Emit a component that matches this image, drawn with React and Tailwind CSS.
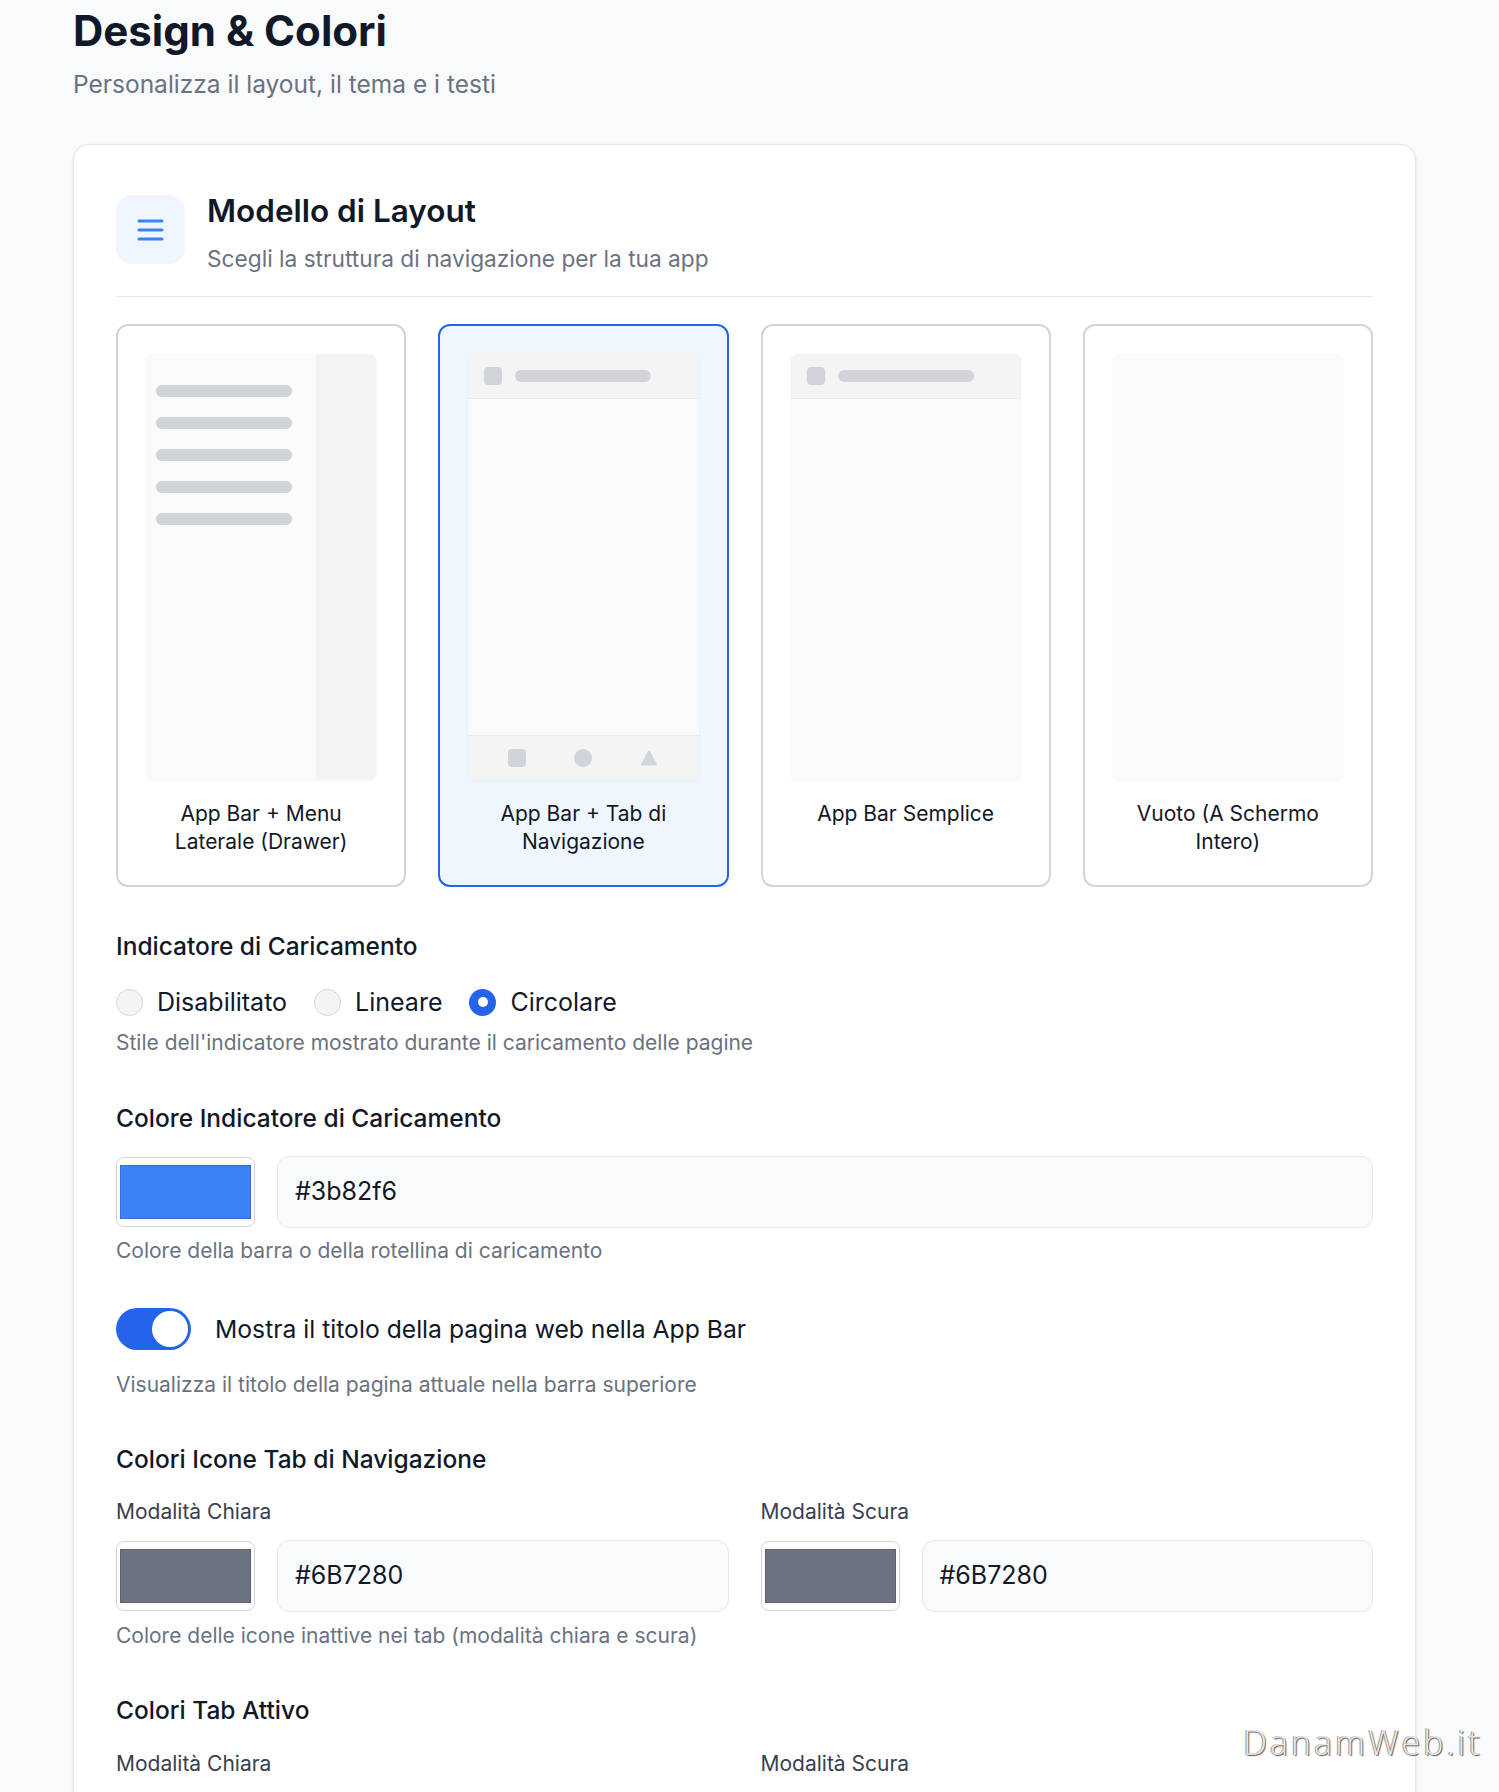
import React from "react";

function MenuGlyph() {
  return (
    <svg width="27" height="22" viewBox="0 0 27 22" fill="none">
      <path
        d="M2 2h23M2 11h23M2 20h23"
        stroke="#3b82f6"
        strokeWidth="3"
        strokeLinecap="round"
      />
    </svg>
  );
}

function AppBar() {
  return (
    <div className="h-[45px] bg-[#f4f4f5] border-b border-[#ebebeb] flex items-center pl-4 gap-[13px]">
      <div className="w-[18px] h-[18px] rounded-[4px] bg-[#d1d5db]"></div>
      <div className="w-[136px] h-3 rounded-full bg-[#d1d5db]"></div>
    </div>
  );
}

function Preview({ type }) {
  if (type === "drawer") {
    return (
      <div className="h-[426px] rounded-md overflow-hidden flex shadow-[0_1px_3px_rgba(0,0,0,0.04)]">
        <div className="w-[170px] bg-[#fafafa] pt-[31px] px-[10px] flex flex-col gap-5">
          <div className="h-3 w-[136px] rounded-full bg-[#d1d5db]"></div>
          <div className="h-3 w-[136px] rounded-full bg-[#d1d5db]"></div>
          <div className="h-3 w-[136px] rounded-full bg-[#d1d5db]"></div>
          <div className="h-3 w-[136px] rounded-full bg-[#d1d5db]"></div>
          <div className="h-3 w-[136px] rounded-full bg-[#d1d5db]"></div>
        </div>
        <div className="flex-1 bg-[#f3f3f4]"></div>
      </div>
    );
  }
  if (type === "tabs") {
    return (
      <div className="h-[426px] rounded-md overflow-hidden flex flex-col bg-[#fafafa] shadow-[0_1px_3px_rgba(0,0,0,0.04)]">
        <AppBar />
        <div className="flex-1"></div>
        <div className="h-[45px] bg-[#f4f4f5] border-t border-[#ebebeb] flex items-center justify-center gap-[48px]">
          <div className="w-[18px] h-[18px] rounded-[4px] bg-[#d1d5db]"></div>
          <div className="w-[18px] h-[18px] rounded-full bg-[#d1d5db]"></div>
          <svg width="18" height="18" viewBox="0 0 18 18">
            <path
              d="M9 2.5 L16 15.5 L2 15.5 Z"
              fill="#d1d5db"
              stroke="#d1d5db"
              strokeWidth="2"
              strokeLinejoin="round"
            />
          </svg>
        </div>
      </div>
    );
  }
  if (type === "simple") {
    return (
      <div className="h-[426px] rounded-md overflow-hidden flex flex-col bg-[#fafafa] shadow-[0_1px_3px_rgba(0,0,0,0.04)]">
        <AppBar />
        <div className="flex-1"></div>
      </div>
    );
  }
  return (
    <div className="h-[426px] rounded-md bg-[#fafafa] shadow-[0_1px_3px_rgba(0,0,0,0.04)]"></div>
  );
}

function LayoutOption({ type, label, selected }) {
  return (
    <div
      className={
        selected
          ? "rounded-xl border-2 border-[#2563eb] bg-[#eff6ff] px-7 pt-7 pb-[29px]"
          : "rounded-xl border-2 border-[#d4d4d8] bg-white px-7 pt-7 pb-[29px]"
      }
    >
      <Preview type={type} />
      <p className="mt-5 h-14 text-[21px] leading-7 text-center text-[#111827]">
        {label}
      </p>
    </div>
  );
}

function Radio({ label, checked }) {
  return (
    <div className="flex items-center gap-[14px]">
      {checked ? (
        <div className="w-[27px] h-[27px] rounded-full bg-[#2563eb] flex items-center justify-center">
          <div className="w-[10px] h-[10px] rounded-full bg-white"></div>
        </div>
      ) : (
        <div className="w-[27px] h-[27px] rounded-full border border-[#d1d5db] bg-[#f3f4f6]"></div>
      )}
      <span className="text-[25px] leading-8 text-[#111827]">{label}</span>
    </div>
  );
}

function Helper({ children, className }) {
  return (
    <p className={"text-[21px] leading-7 text-[#6b7280] " + className}>
      {children}
    </p>
  );
}

function SectionTitle({ children, className }) {
  return (
    <h3
      className={
        "text-[24.5px] leading-8 font-medium text-[#111827] " + className
      }
    >
      {children}
    </h3>
  );
}

function ColorField({ color, value }) {
  return (
    <div className="flex items-center gap-[22px]">
      <div className="w-[139px] h-[70px] shrink-0 rounded-lg border border-[#d1d5db] bg-white px-[3px] flex items-center">
        <div
          className="w-full h-[54px] border border-[#00000022]"
          style={{ backgroundColor: color }}
        ></div>
      </div>
      <div className="flex-1 h-[72px] rounded-xl border border-[#e5e7eb] bg-[#f9fafb] px-[17px] flex items-center text-[25px] text-[#111827]">
        {value}
      </div>
    </div>
  );
}

function ModeLabel({ children }) {
  return <p className="text-[21px] leading-7 text-[#374151]">{children}</p>;
}

export default function App() {
  return (
    <div className="relative min-h-screen bg-[#f8fafc] font-['Inter',sans-serif] overflow-hidden">
      <div className="pl-[73px] pt-[7px]">
        <h1 className="text-[42px] leading-[48px] font-bold text-[#111827]">
          Design &amp; Colori
        </h1>
        <p className="mt-[13px] text-[24.5px] leading-8 text-[#6b7280]">
          Personalizza il layout, il tema e i testi
        </p>

        <div className="mt-[44px] w-[1343px] bg-white border border-[#e5e7eb] rounded-2xl shadow-sm px-[42px] pt-[48px] pb-10">
          <div className="flex items-start gap-[22px] pb-[21px] border-b border-[#e5e7eb]">
            <div className="mt-[2px] w-[69px] h-[69px] rounded-2xl bg-[#eff6ff] flex items-center justify-center">
              <MenuGlyph />
            </div>
            <div>
              <h2 className="text-[31.5px] leading-9 font-semibold text-[#111827]">
                Modello di Layout
              </h2>
              <p className="mt-[14px] text-[22.7px] leading-8 text-[#6b7280]">
                Scegli la struttura di navigazione per la tua app
              </p>
            </div>
          </div>

          <div className="mt-[27px] grid grid-cols-4 gap-8">
            <LayoutOption type="drawer" label="App Bar + Menu Laterale (Drawer)" />
            <LayoutOption type="tabs" label="App Bar + Tab di Navigazione" selected />
            <LayoutOption type="simple" label="App Bar Semplice" />
            <LayoutOption type="empty" label="Vuoto (A Schermo Intero)" />
          </div>

          <SectionTitle className="mt-[43px]">Indicatore di Caricamento</SectionTitle>
          <div className="mt-6 flex items-center gap-[27px]">
            <Radio label="Disabilitato" />
            <Radio label="Lineare" />
            <Radio label="Circolare" checked />
          </div>
          <Helper className="mt-[11px]">
            Stile dell'indicatore mostrato durante il caricamento delle pagine
          </Helper>

          <SectionTitle className="mt-[45px]">
            Colore Indicatore di Caricamento
          </SectionTitle>
          <div className="mt-[22px]">
            <ColorField color="#3b82f6" value="#3b82f6" />
          </div>
          <Helper className="mt-[9px]">
            Colore della barra o della rotellina di caricamento
          </Helper>

          <div className="mt-[43px] flex items-center gap-6">
            <div className="w-[75px] h-[42px] rounded-full bg-[#2563eb] p-[3px] flex justify-end">
              <div className="w-[36px] h-[36px] rounded-full bg-white"></div>
            </div>
            <span className="text-[24.7px] leading-8 text-[#111827]">
              Mostra il titolo della pagina web nella App Bar
            </span>
          </div>
          <Helper className="mt-[21px]">
            Visualizza il titolo della pagina attuale nella barra superiore
          </Helper>

          <SectionTitle className="mt-[44px]">
            Colori Icone Tab di Navigazione
          </SectionTitle>
          <div className="mt-[23px] grid grid-cols-2 gap-8">
            <div>
              <ModeLabel>Modalità Chiara</ModeLabel>
              <div className="mt-[14px]">
                <ColorField color="#6B7280" value="#6B7280" />
              </div>
            </div>
            <div>
              <ModeLabel>Modalità Scura</ModeLabel>
              <div className="mt-[14px]">
                <ColorField color="#6B7280" value="#6B7280" />
              </div>
            </div>
          </div>
          <Helper className="mt-[10px]">
            Colore delle icone inattive nei tab (modalità chiara e scura)
          </Helper>

          <SectionTitle className="mt-[44px]">Colori Tab Attivo</SectionTitle>
          <div className="mt-6 grid grid-cols-2 gap-8">
            <div>
              <ModeLabel>Modalità Chiara</ModeLabel>
              <div className="mt-[14px]">
                <ColorField color="#2563eb" value="#2563eb" />
              </div>
            </div>
            <div>
              <ModeLabel>Modalità Scura</ModeLabel>
              <div className="mt-[14px]">
                <ColorField color="#60a5fa" value="#60a5fa" />
              </div>
            </div>
          </div>
        </div>
      </div>

      <div className="absolute left-[1243px] top-[1718px] font-['Open_Sans',sans-serif] font-light text-[34px] leading-[48px] tracking-[3px] text-[#e8e8e8] [text-shadow:1px_1px_1px_#555,-1px_0_0_#9a9a9a]">
        DanamWeb.it
      </div>
    </div>
  );
}
